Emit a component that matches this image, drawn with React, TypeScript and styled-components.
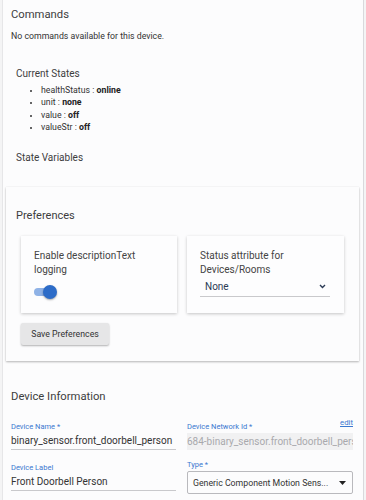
import React from 'react';
import styled, { createGlobalStyle } from 'styled-components';

const GlobalStyle = createGlobalStyle`
  html, body {
    margin: 0;
    padding: 0;
    background: #f4f4f5;
    font-family: Roboto, "Noto Sans", "Liberation Sans", sans-serif;
    color: #3a3a3a;
  }
  #root {
    width: 366px;
    height: 500px;
    overflow: hidden;
  }
`;

// Estilos
const Page = styled.div`
  margin: 0 2px 0 2px;
  width: 360px;
  height: 500px;
  background: #fcfcfd;
  border-left: 1px solid #e6e6e8;
  border-right: 1px solid #d9d9dc;
`;

const Section = styled.div<{ $pad: number; $top: number }>`
  padding-left: ${({ $pad }) => $pad}px;
  padding-top: ${({ $top }) => $top}px;
`;

const Heading = styled.div<{ $size: number; $gap?: number }>`
  font-size: ${({ $size }) => $size}px;
  line-height: 14px;
  color: #3d3d3d;
  margin-top: ${({ $gap }) => $gap ?? 0}px;
`;

const Paragraph = styled.div`
  font-size: 8.75px;
  line-height: 12px;
  color: #333;
  margin-top: 8px;
`;

const StateList = styled.ul`
  margin: 3px 0 0 0;
  padding-left: 25px;
  font-size: 8.75px;
  line-height: 12.3px;
  color: #333;

  li::marker {
    font-size: 7px;
  }

  b {
    font-weight: 700;
    color: #222;
  }
`;

const PrefCard = styled.div`
  margin: 22px 4px 0 3px;
  background: #fcfcfd;
  box-shadow: 0 1px 2px rgba(0, 0, 0, 0.28), 0 0 1px rgba(0, 0, 0, 0.08);
  padding: 22px 14px 16px 15px;
`;

const PrefTitle = styled.div`
  font-size: 11px;
  line-height: 14px;
  color: #3d3d3d;
  margin-left: -5px;
`;

const PrefGrid = styled.div`
  display: grid;
  grid-template-columns: 156px 157px;
  gap: 10px;
  margin-top: 13px;
`;

const PrefItem = styled.div`
  background: #fdfdfe;
  box-shadow: 0 1px 3px rgba(0, 0, 0, 0.22);
  padding: 13px 14px 14px 13px;
  height: 77px;
  box-sizing: border-box;
`;

const PrefLabel = styled.div`
  font-size: 10px;
  line-height: 13.5px;
  color: #444;
`;

const Toggle = styled.div<{ $on: boolean }>`
  position: relative;
  margin-top: 9px;
  width: 23px;
  height: 14px;

  &::before {
    content: '';
    position: absolute;
    left: 0;
    top: 3px;
    width: 20px;
    height: 8px;
    border-radius: 4px;
    background: ${({ $on }) => ($on ? '#8fb2e6' : '#bbb')};
  }

  &::after {
    content: '';
    position: absolute;
    left: ${({ $on }) => ($on ? '9px' : '0')};
    top: 0;
    width: 14px;
    height: 14px;
    border-radius: 50%;
    background: ${({ $on }) => ($on ? '#2d6cc8' : '#f5f5f5')};
    box-shadow: 0 1px 2px rgba(0, 0, 0, 0.35);
  }
`;

const SelectLine = styled.div`
  display: flex;
  align-items: center;
  justify-content: space-between;
  height: 20px;
  border-bottom: 1px solid #c9c9cc;
  padding: 0 4px 0 5px;
  font-size: 10px;
  color: #2b3a55;
`;

const SaveButton = styled.button`
  margin-top: 10px;
  width: 88px;
  height: 22px;
  border: none;
  border-radius: 2px;
  background: #e6e6e7;
  box-shadow: 0 1px 2px rgba(0, 0, 0, 0.3);
  font-family: inherit;
  font-size: 8.75px;
  color: #333;
  padding: 0;
`;

const InfoSection = styled.div`
  padding: 29px 10px 0 8px;
`;

const FieldGrid = styled.div`
  display: grid;
  grid-template-columns: 165px 166px;
  gap: 11px;
  margin-top: 18px;
`;

const Column = styled.div`
  display: flex;
  flex-direction: column;
`;

const Field = styled.div<{ $gap: number }>`
  margin-top: ${({ $gap }) => $gap}px;
`;

const LabelRow = styled.div`
  display: flex;
  justify-content: space-between;
  align-items: flex-end;
`;

const FieldLabel = styled.div`
  font-size: 7.5px;
  line-height: 10px;
  color: #3b78d0;
`;

const EditLink = styled.a`
  font-size: 7.8px;
  line-height: 10px;
  color: #3b78d0;
  text-decoration: underline;
  margin-top: -4px;
  align-self: flex-start;
`;

const TextInput = styled.div`
  margin-top: 3px;
  font-size: 10px;
  line-height: 12px;
  color: #333;
  padding-bottom: 2px;
  border-bottom: 1px solid #c9c9cc;
  white-space: nowrap;
  overflow: hidden;
`;

const ReadOnlyInput = styled.div`
  margin-top: 1px;
  height: 17px;
  line-height: 17px;
  background: #f1f1f2;
  font-size: 10px;
  color: #a9a9ad;
  white-space: nowrap;
  overflow: hidden;
  text-overflow: clip;
`;

const SelectBox = styled.div`
  margin-top: 1px;
  height: 23px;
  box-sizing: border-box;
  border: 1px solid #b9b9bd;
  border-radius: 2px;
  display: flex;
  align-items: center;
  justify-content: space-between;
  padding: 0 6px 0 5px;
  font-size: 8.75px;
  color: #333;
  white-space: nowrap;
`;

const Chevron = () => (
  <svg width="7" height="5" viewBox="0 0 7 5">
    <path d="M1 1 L3.5 3.5 L6 1" fill="none" stroke="#2b3a55" strokeWidth="1.4" />
  </svg>
);

const Caret = () => (
  <svg width="7" height="4" viewBox="0 0 7 4">
    <polygon points="0,0 7,0 3.5,4" fill="#222" />
  </svg>
);

const states = [
  { name: 'healthStatus', value: 'online' },
  { name: 'unit', value: 'none' },
  { name: 'value', value: 'off' },
  { name: 'valueStr', value: 'off' },
];

const App: React.FC = () => (
  <>
    <GlobalStyle />
    <Page>
      <Section $pad={8} $top={8}>
        <Heading $size={11.25}>Commands</Heading>
        <Paragraph>No commands available for this device.</Paragraph>
      </Section>

      <Section $pad={13} $top={25}>
        <Heading $size={10}>Current States</Heading>
        <StateList>
          {states.map((s) => (
            <li key={s.name}>
              {s.name} : <b>{s.value}</b>
            </li>
          ))}
        </StateList>
        <Heading $size={10} $gap={18}>State Variables</Heading>
      </Section>

      <PrefCard>
        <PrefTitle>Preferences</PrefTitle>
        <PrefGrid>
          <PrefItem>
            <PrefLabel>Enable descriptionText logging</PrefLabel>
            <Toggle $on />
          </PrefItem>
          <PrefItem>
            <PrefLabel>Status attribute for Devices/Rooms</PrefLabel>
            <SelectLine>
              <span>None</span>
              <Chevron />
            </SelectLine>
          </PrefItem>
        </PrefGrid>
        <SaveButton>Save Preferences</SaveButton>
      </PrefCard>

      <InfoSection>
        <Heading $size={11.25}>Device Information</Heading>
        <FieldGrid>
          <Column>
            <Field $gap={0}>
              <FieldLabel>Device Name *</FieldLabel>
              <TextInput>binary_sensor.front_doorbell_person</TextInput>
            </Field>
            <Field $gap={13}>
              <FieldLabel>Device Label</FieldLabel>
              <TextInput>Front Doorbell Person</TextInput>
            </Field>
          </Column>
          <Column>
            <Field $gap={0}>
              <LabelRow>
                <FieldLabel>Device Network Id *</FieldLabel>
                <EditLink>edit</EditLink>
              </LabelRow>
              <ReadOnlyInput>684-binary_sensor.front_doorbell_pers</ReadOnlyInput>
            </Field>
            <Field $gap={10}>
              <FieldLabel>Type *</FieldLabel>
              <SelectBox>
                <span>Generic Component Motion Sens...</span>
                <Caret />
              </SelectBox>
            </Field>
          </Column>
        </FieldGrid>
      </InfoSection>
    </Page>
  </>
);

export default App;
